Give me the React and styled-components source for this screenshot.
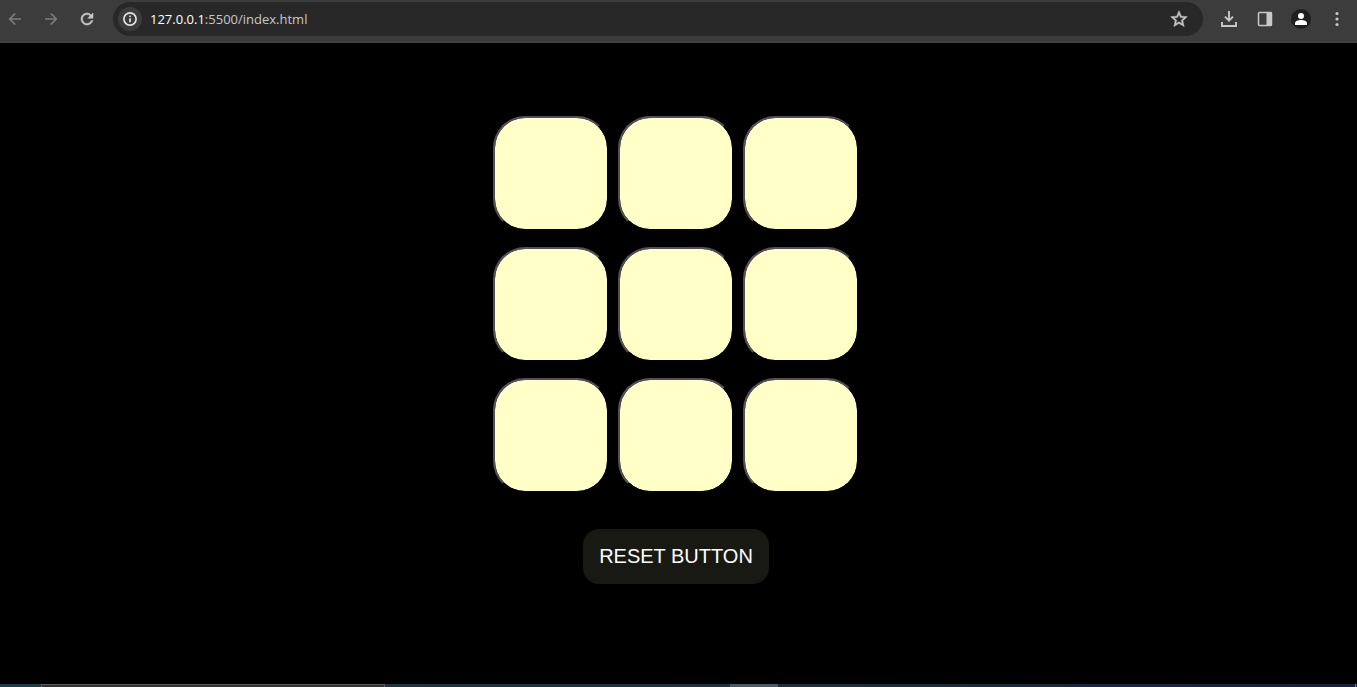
import React, { useState } from 'react';
import styled, { createGlobalStyle } from 'styled-components';
import { MdRefresh, MdStarBorder } from 'react-icons/md';

const GlobalStyle = createGlobalStyle`
  *, *::before, *::after { box-sizing: border-box; }
  body { margin: 0; background: #000; }
`;

const Page = styled.div`
  display: flex;
  flex-direction: column;
  min-height: 100vh;
  background: #000;
`;

const BrowserBar = styled.header`
  display: flex;
  align-items: flex-start;
  height: 43px;
  padding: 2px 4px 0 0;
  background: #3c3c3c;
  border-bottom: 1px solid #444;
`;

const NavGroup = styled.nav`
  display: flex;
  gap: 4px;
  flex: none;
  margin-left: -1px;
  padding-right: 10px;
`;

const ToolGroup = styled.div`
  display: flex;
  gap: 4px;
  flex: none;
  padding-left: 10px;
`;

const IconButton = styled.button`
  display: flex;
  align-items: center;
  justify-content: center;
  width: 32px;
  height: 34px;
  padding: 0;
  border: 0;
  background: none;
  color: ${({ $dim }) => ($dim ? '#7c7c7c' : '#c7c7c7')};
`;

const AddressBar = styled.div`
  display: flex;
  align-items: center;
  flex: 1;
  min-width: 0;
  height: 34px;
  padding: 0 8px 0 5px;
  border-radius: 17px;
  background: #282828;
`;

const SiteInfo = styled(IconButton)`
  width: 24px;
  height: 24px;
  border-radius: 50%;
  background: #3c3c3c;
  color: #e3e3e3;
`;

const Url = styled.a`
  flex: 1;
  margin-left: 8px;
  font: 13px/20px "Open Sans", "Noto Sans", sans-serif;
  color: #c7c7c7;
  text-decoration: none;
`;

const Host = styled.span`
  color: #fff;
`;

const Game = styled.main`
  display: flex;
  flex: 1;
  flex-direction: column;
  align-items: center;
  gap: 36px;
  padding: 73px 5px 24px 0;
`;

const Board = styled.div`
  display: grid;
  grid-template-columns: repeat(3, 116px);
  grid-auto-rows: 115px;
  gap: 16px 9px;
`;

const Cell = styled.button`
  padding: 0;
  border: 2px solid;
  border-color: #555055 #000 #000 #555055;
  border-radius: 32px;
  background: #ffffc7;
  background-clip: padding-box;
  font: 64px "Liberation Sans", Arial, sans-serif;
  color: #b0413e;
`;

const ResetButton = styled.button`
  padding: 16px;
  border: 0;
  border-radius: 16px;
  background: #191913;
  color: #fff;
  font: 20px/23px "Liberation Sans", Arial, sans-serif;
`;

const Taskbar = styled.footer`
  display: flex;
  height: 3px;
  padding: 0 1px 0 41px;
  background: linear-gradient(90deg, #1d3a46, #1b3140 55%, #17203f);
`;

const SearchBox = styled.div`
  width: 344px;
  border: 1px solid #5c5c5c;
  border-bottom: 0;
  background: #333;
`;

const ActiveTask = styled.div`
  width: 48px;
  margin-left: 345px;
  background: #4a5b64;
`;

const DesktopEdge = styled.div`
  width: 1px;
  margin-left: auto;
  background: #7b8290;
`;

const ReloadIcon = styled(MdRefresh)`
  stroke-width: 0.7;
  path[fill='none'] { stroke: none; }
`;

const StarIcon = styled(MdStarBorder)`
  stroke-width: 0.6;
  path[fill='none'] { stroke: none; }
`;

function Icon({ size = 16, children }) {
  return (
    <svg width={size} height={size} viewBox={`0 0 ${size} ${size}`} fill="none" stroke="currentColor" strokeWidth="1.7" aria-hidden="true">
      {children}
    </svg>
  );
}

const BackIcon = () => <Icon><path d="M14 8H3M8.2 2.5 2.7 8l5.5 5.5" /></Icon>;
const ForwardIcon = () => <Icon><path d="M2 8h11M7.8 2.5 13.3 8l-5.5 5.5" /></Icon>;
const InfoIcon = () => (
  <Icon>
    <circle cx="8" cy="8" r="6.1" />
    <path d="M8 7.2v4M8 4.4v1.7" />
  </Icon>
);
const DownloadIcon = () => (
  <Icon size={18}>
    <path d="M9 1v9M5 6.6l4 4 4-4M2 12v4h14v-4" strokeWidth="1.9" />
  </Icon>
);
const SidePanelIcon = () => (
  <Icon>
    <rect x="1.5" y="1.5" width="13" height="13" rx="1" strokeWidth="1.5" />
    <path d="M9.5 1h4.5a1 1 0 0 1 1 1v12a1 1 0 0 1-1 1H9.5Z" fill="currentColor" stroke="none" />
  </Icon>
);
const ProfileIcon = () => (
  <Icon size={20}>
    <circle cx="10" cy="10" r="10" fill="#1f1f1f" stroke="none" />
    <circle cx="10" cy="7" r="3" fill="#fff" stroke="none" />
    <path d="M4 16v-1.8c0-2 3.2-3.2 6-3.2s6 1.2 6 3.2V16Z" fill="#fff" stroke="none" />
  </Icon>
);
const MenuIcon = () => (
  <Icon>
    <g fill="currentColor" stroke="none">
      <circle cx="8" cy="2.5" r="1.6" />
      <circle cx="8" cy="8" r="1.6" />
      <circle cx="8" cy="13.5" r="1.6" />
    </g>
  </Icon>
);

const emptyBoard = Array(9).fill('');

export default function App() {
  const [cells, setCells] = useState(emptyBoard);

  const play = (index) => {
    if (cells[index]) return;
    const mark = cells.filter(Boolean).length % 2 ? 'X' : 'O';
    setCells(cells.map((cell, i) => (i === index ? mark : cell)));
  };

  return (
    <Page>
      <GlobalStyle />
      <BrowserBar>
        <NavGroup>
          <IconButton $dim aria-label="Back"><BackIcon /></IconButton>
          <IconButton $dim aria-label="Forward"><ForwardIcon /></IconButton>
          <IconButton aria-label="Reload"><ReloadIcon size={18} /></IconButton>
        </NavGroup>
        <AddressBar>
          <SiteInfo aria-label="Site information"><InfoIcon /></SiteInfo>
          <Url href="#"><Host>127.0.0.1</Host>:5500/index.html</Url>
          <IconButton aria-label="Bookmark"><StarIcon size={20} /></IconButton>
        </AddressBar>
        <ToolGroup>
          <IconButton aria-label="Downloads"><DownloadIcon /></IconButton>
          <IconButton aria-label="Side panel"><SidePanelIcon /></IconButton>
          <IconButton aria-label="Profile"><ProfileIcon /></IconButton>
          <IconButton aria-label="Menu"><MenuIcon /></IconButton>
        </ToolGroup>
      </BrowserBar>
      <Game>
        <Board>
          {cells.map((mark, i) => (
            <Cell key={i} aria-label={`Square ${i + 1}`} onClick={() => play(i)}>{mark}</Cell>
          ))}
        </Board>
        <ResetButton onClick={() => setCells(emptyBoard)}>RESET BUTTON</ResetButton>
      </Game>
      <Taskbar>
        <SearchBox />
        <ActiveTask />
        <DesktopEdge />
      </Taskbar>
    </Page>
  );
}
